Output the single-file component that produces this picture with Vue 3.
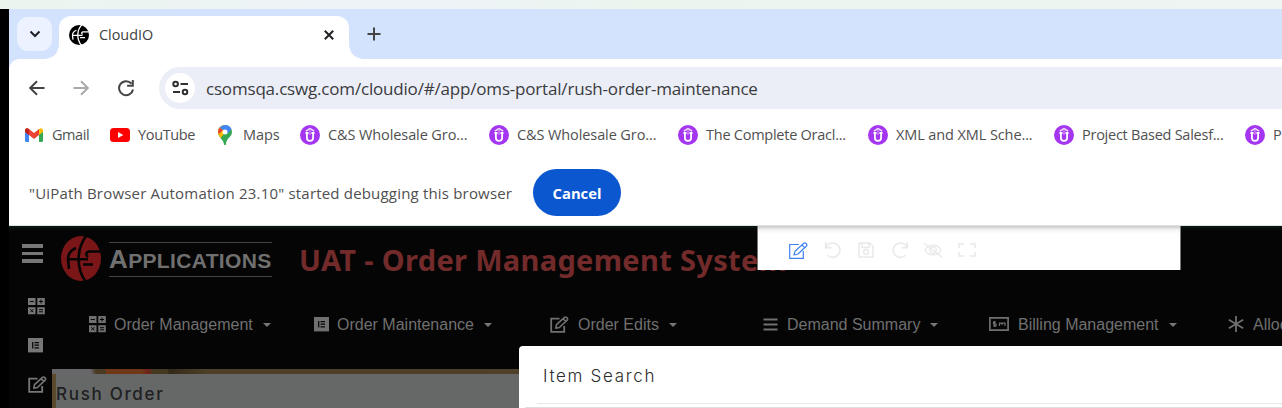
<script setup>
const courses = [
  { title: 'C&S Wholesale Gro...', width: 189 },
  { title: 'C&S Wholesale Gro...', width: 189 },
  { title: 'The Complete Oracl...', width: 190 },
  { title: 'XML and XML Sche...', width: 186 },
  { title: 'Project Based Salesf...', width: 191 },
  { title: 'P', width: 100 },
]
const menus = [
  { label: 'Order Management', icon: 'calc', w: 225 },
  { label: 'Order Maintenance', icon: 'form', w: 236 },
  { label: 'Order Edits', icon: 'edit', w: 213 },
  { label: 'Demand Summary', icon: 'bars', w: 226 },
  { label: 'Billing Management', icon: 'money', w: 239 },
  { label: 'Alloc', icon: 'star', w: 160 },
]
const tools = ['undo', 'save', 'redo', 'hide', 'full']
</script>

<template>
  <svg class="defs" aria-hidden="true">
    <symbol id="calc" viewBox="0 0 17 17">
      <path d="M0 0h7.5v7H0zM9.3 0h7.5v7H9.3zM0 9.2h7.5v7H0zM9.3 9.2h7.5v7H9.3z" fill="currentColor" />
      <path d="M1.8 3.5h4M11 3.5h4M13 1.5v4M2.3 11.2l3 3M5.3 11.2l-3 3M11 11.7h4M11 13.8h4" stroke="#050505" />
    </symbol>
    <symbol id="form" viewBox="0 0 15 15">
      <path d="M0 0h15v14.4H0z" fill="currentColor" />
      <path d="M4.7 4v6.5M6.5 4.7H11M6.5 7.2H11M6.5 9.8H11" stroke="#050505" stroke-width="1.2" />
    </symbol>
    <symbol id="edit" viewBox="0 0 19 17">
      <path d="M9.5 2.7H1.2v13.2h13V10" fill="none" stroke="currentColor" stroke-width="1.8" />
      <path d="M5.8 12.2l.7-3.6 8-7.2c1.4-1.2 4 .9 2.7 2.7L9.4 11.5zM13.2 2.7l2.8 2.9" fill="none" stroke="currentColor" stroke-width="1.6" stroke-linejoin="round" />
    </symbol>
    <symbol id="editthin" viewBox="0 0 19 17">
      <path d="M10 2.5H.7v13.8h13.6V9" fill="none" stroke="currentColor" stroke-width="1.2" />
      <path d="M5 13l1-3.7 8.8-8c1.3-1.2 4 .9 2.7 2.7L9 12zM13 3l2.8 2.8" fill="none" stroke="currentColor" stroke-width="1.2" stroke-linejoin="round" />
    </symbol>
    <symbol id="bars" viewBox="0 0 15 15">
      <path d="M.5 2.500h14M.5 7.500h14M.5 12.500h14" stroke="currentColor" stroke-width="1.800" />
    </symbol>
    <symbol id="money" viewBox="0 0 20 14">
      <path d="M.9.9h18.2v12.2H.9z" fill="none" stroke="currentColor" stroke-width="1.7" />
      <path d="M7 5H4.500v2H7v2H4M5.500 4v6M10.500 9V6.200H16V9M13 6v2" fill="none" stroke="currentColor" stroke-width="1.2" />
    </symbol>
    <symbol id="star" viewBox="0 0 16 16">
      <path d="M8 0v16M.8 3.8l14.4 8.4M15.2 3.8L.8 12.2" stroke="currentColor" stroke-width="1.8" />
    </symbol>
    <symbol id="undo" viewBox="0 0 18 18">
      <path d="M1.7 1v5.700h5.800M2 6.400a7.200 7.200 0 1 1 1.500 7.800" fill="none" stroke="currentColor" stroke-width="1.600" />
    </symbol>
    <symbol id="redo" viewBox="0 0 18 18">
      <path d="M16.3 1v5.700h-5.800M16 6.400a7.200 7.200 0 1 0-1.500 7.800" fill="none" stroke="currentColor" stroke-width="1.600" />
    </symbol>
    <symbol id="save" viewBox="0 0 18 18">
      <path d="M2 2h10.700L16 5.200V16H2zM5 2v4.500h7V2" fill="none" stroke="currentColor" stroke-width="1.500" />
      <circle cx="9" cy="11" r="2.400" fill="none" stroke="currentColor" stroke-width="1.500" />
    </symbol>
    <symbol id="hide" viewBox="0 0 20 18">
      <path d="M1 9c4-7.200 14-7.200 18 0-4 7.200-14 7.200-18 0zM0 1.500L20 17" fill="none" stroke="currentColor" stroke-width="1.500" />
      <circle cx="10" cy="9" r="3.600" fill="none" stroke="currentColor" stroke-width="1.500" />
    </symbol>
    <symbol id="full" viewBox="0 0 18 18">
      <path d="M1 7V3h5M12 3h5v4M17 11v4h-5M6 15H1v-4" fill="none" stroke="currentColor" stroke-width="1.500" />
    </symbol>
    <symbol id="globe" viewBox="0 0 40 45">
      <ellipse cx="20" cy="22.500" rx="20" ry="22.500" fill="currentColor" />
      <path class="cut" d="M26 -1C15 12 15 33 25 46M15 12C10 14 7 18 7 23.200L8 33M7 23.200H27M39 15.500H28C25 16 24.500 19 27 21M22 28.500H32" />
    </symbol>
    <symbol id="udemy" viewBox="0 0 20 20">
      <circle cx="10" cy="10" r="10" fill="#a435f0" />
      <path d="M5.800 6.200L10 3.700l4.200 2.500" fill="none" stroke="#f4e4ff" stroke-width="1.500" />
      <path d="M6.900 8v4.700c0 4.300 6.200 4.300 6.200 0V8M5.500 8h3M11.500 8h3" fill="none" stroke="#fff" stroke-width="1.800" />
      <path d="M10 4v6" stroke="#d79afa" stroke-width="1.100" />
    </symbol>
  </svg>

  <div class="screen">
    <div class="wallpaper"></div>
    <div class="window">
      <div class="tabs">
        <div class="tabsearch"><svg width="12" height="8"><path d="M1.500 1.500L6 6l4.500-4.500" /></svg></div>
        <div class="tab">
          <svg class="fav" preserveAspectRatio="none" viewBox="0 0 40 45"><use href="#globe" width="40" height="45" /></svg>
          <span class="tabname">CloudIO</span>
          <svg class="close" width="10" height="10"><path d="M.8.8l8.400 8.400M9.200.8L.8 9.200" /></svg>
        </div>
        <svg class="plus" width="14" height="14"><path d="M7 .5v13M.5 7h13" /></svg>
      </div>
      <div class="toolbar">
        <svg class="nav" width="16" height="16"><path d="M15.500 8H1.500M8 1.200L1.200 8 8 14.800" /></svg>
        <svg class="nav off" width="16" height="16"><path d="M.5 8h14M8 1.200L14.800 8 8 14.800" /></svg>
        <svg class="nav reload" width="18" height="18"><path d="M14.500 4.700A7 7 0 1 0 16 10.500M15.800 1v5.700h-5.700" /></svg>
        <div class="omnibox">
          <div class="site">
            <svg width="17" height="16"><circle cx="3.600" cy="4" r="2.300" /><path d="M8.500 4H16M1 12h7" /><circle cx="13" cy="12" r="2.300" /></svg>
          </div>
          <span class="url">csomsqa.cswg.com/cloudio/#/app/oms-portal/rush-order-maintenance</span>
        </div>
      </div>
      <div class="bookmarks">
        <div class="bm gmail">
          <svg width="18" height="14" viewBox="0 0 18 14">
            <path d="M0 2v10.500Q0 14 1.500 14H4V5z" fill="#4285f4" />
            <path d="M18 2v10.500q0 1.500-1.500 1.500H14V5z" fill="#34a853" />
            <path d="M14 1l-1 4 1 2 4-3V2q-1-3-4-1z" fill="#fbbc04" />
            <path d="M0 4V2q1-3 4-1l5 4 5-4v6l-5 4-5-4z" fill="#ea4335" />
            <path d="M0 2v2l4 3V1Q1-1 0 2z" fill="#c5221f" />
          </svg>
          <span>Gmail</span>
        </div>
        <div class="bm youtube">
          <svg width="20" height="14"><rect width="20" height="14" rx="3.500" fill="#f00" /><path d="M8 4l5.300 3L8 10z" fill="#fff" /></svg>
          <span>YouTube</span>
        </div>
        <div class="bm maps">
          <svg width="14" height="20" viewBox="0 0 14 20">
            <path d="M14 7c0 5-6 6-6 12.500q-1 1-2 0C6 15 0 12 0 7a7 7 0 0 1 14 0z" fill="#34a853" />
            <path d="M0 7q0 3 2.500 6L11 3 7 0Q0 1 0 7z" fill="#fbbc04" />
            <path d="M0 7q0-2 1.600-4.500L5 5 1 9z" fill="#ea4335" />
            <path d="M1.600 2.500Q4 0 7 0q5 0 6.500 4.500L9 9 5 5z" fill="#4285f4" />
            <circle cx="7" cy="7" r="2.500" fill="#fff" />
          </svg>
          <span>Maps</span>
        </div>
        <div v-for="(c, i) in courses" :key="i" class="bm course" :style="{ width: c.width + 'px' }">
          <svg width="20" height="20"><use href="#udemy" /></svg>
          <span>{{ c.title }}</span>
        </div>
      </div>
      <div class="infobar">
        <span class="message">"UiPath Browser Automation 23.10" started debugging this browser</span>
        <button class="cancel">Cancel</button>
      </div>

      <div class="app">
        <aside>
          <div class="burger"><i></i><i></i><i></i></div>
          <svg class="s1"><use href="#calc" /></svg>
          <svg class="s2"><use href="#form" /></svg>
          <svg class="s3"><use href="#edit" /></svg>
        </aside>
        <main>
          <header>
            <svg class="brand"><use href="#globe" /></svg>
            <div class="brandname"><span><b>A</b>PPLICATIONS</span></div>
            <h1>UAT - Order Management System</h1>
          </header>
          <nav>
            <div v-for="m in menus" :key="m.label" class="menu" :style="{ width: m.w + 'px' }">
              <svg :class="m.icon"><use :href="'#' + m.icon" /></svg>
              <span>{{ m.label }}</span>
              <i class="caret"></i>
            </div>
          </nav>
          <section class="page">
            <div class="photo"></div>
            <h2>Rush Order</h2>
          </section>
        </main>
        <div class="tools">
          <svg class="active"><use href="#editthin" /></svg>
          <svg v-for="t in tools" :key="t"><use :href="'#' + t" /></svg>
        </div>
        <div class="modal">
          <h3>Item Search</h3>
          <div class="rule"></div>
          <div class="body"></div>
        </div>
      </div>
    </div>
  </div>
</template>

<style>
body { overflow: hidden; }
</style>

<style scoped>
* { box-sizing: border-box; }
svg { flex: none; display: block; }
.defs { position: absolute; width: 0; height: 0; }
.screen { width: 1282px; height: 408px; overflow: hidden; background: #000; font-family: "Open Sans", "Noto Sans", sans-serif; white-space: nowrap; }
.wallpaper { height: 9px; background: linear-gradient(90deg, #ebf5ee, #eef3f9 400px, #ebf5ee 640px, #eef5f3); }
.window { margin-left: 9px; height: 399px; background: #fff; overflow: hidden; }

.tabs { height: 50px; background: #d3e3fd; display: flex; }
.tabsearch { width: 35px; height: 34px; margin: 8px 7px 0 8px; border-radius: 11px; background: #ecf2ff; display: flex; align-items: center; justify-content: center; }
.tabsearch svg { fill: none; stroke: #202124; stroke-width: 2; }
.tab { position: relative; width: 290px; height: 43px; margin-top: 7px; padding: 0 15px 6px 10px; border-radius: 12px 12px 0 0; background: #fff; display: flex; align-items: center; }
.tab::before, .tab::after { content: ""; position: absolute; bottom: 0; width: 14px; height: 14px; }
.tab::before { left: -14px; background: radial-gradient(circle at 0 0, transparent 13.500px, #fff 14px); }
.tab::after { right: -14px; background: radial-gradient(circle at 100% 0, transparent 13.500px, #fff 14px); }
.fav { width: 20px; height: 20px; color: #000; --cut: #fff; }
.cut { fill: none; stroke: var(--cut, #050505); stroke-width: 2.600; }
.tabname { margin-left: 10px; font-size: 14.400px; color: #404040; }
.close { margin-left: auto; stroke: #202124; stroke-width: 2; }
.plus { margin: 18px 0 0 18px; stroke: #444; stroke-width: 2; }

.toolbar { height: 53px; background: radial-gradient(circle at 10px 10px, #fff 9.500px, #d3e3fd 10px) 0 0 / 10px 10px no-repeat, linear-gradient(#fff, #fff) 10px 0 no-repeat; display: flex; align-items: center; padding: 5px 0 0 20px; }
.nav { fill: none; stroke: #444; stroke-width: 2; margin-right: 28px; }
.nav.off { stroke: #aaa; }
.nav.reload { margin-right: 24px; }
.omnibox { flex: 1; height: 42px; border-radius: 21px 0 0 21px; background: #ebeef7; display: flex; align-items: center; padding-left: 6px; }
.site { width: 30px; height: 30px; border-radius: 50%; background: #fff; display: flex; align-items: center; justify-content: center; }
.site svg { fill: none; stroke: #303030; stroke-width: 2; }
.url { margin-left: 11px; font-size: 17px; letter-spacing: -.185px; color: #3a3b3e; }

.bookmarks { height: 46px; display: flex; align-items: center; padding: 0 0 1px 16px; font-size: 14.500px; letter-spacing: -.1px; color: #505050; }
.bm { display: flex; align-items: center; flex: none; }
.bm svg { position: relative; top: .5px; }
.gmail { width: 85px; gap: 9px; }
.gmail span { letter-spacing: -.45px; }
.youtube { width: 108px; gap: 8px; }
.youtube span { letter-spacing: -.35px; }
.maps { width: 82px; gap: 11px; }
.course { gap: 8px; }
.course:nth-child(6) span, .course:nth-child(8) span { letter-spacing: -.25px; }

.infobar { height: 67px; padding: 2px 0 0 20px; display: flex; align-items: center; color: #505050; }
.message { width: 504px; font-size: 15px; letter-spacing: .185px; }
.cancel { width: 88px; height: 47px; border: 0; border-radius: 24px; background: #0b57d0; color: #fff; font: 700 14.800px "Open Sans", sans-serif; padding: 0; }

.app { position: relative; height: 183px; border-top: 1px solid #dde3df; background: #050505; display: flex; color: #707070; }
.app::before { content: ""; position: absolute; top: 0; left: 0; right: 0; height: 5px; background: linear-gradient(#0b1714, #050505); }
aside { width: 43px; position: relative; padding-top: 18px; }
.burger { display: grid; gap: 4px; width: 21px; margin-left: 13px; }
.burger i { height: 3.500px; background: #777; }
aside svg { color: #777; }
.s1 { width: 17px; height: 17px; margin: 35px 0 0 19px; }
.s2 { width: 15px; height: 15px; margin: 23px 0 0 19px; }
.s3 { width: 19px; height: 17px; margin: 23px 0 0 19px; }
main { flex: 1; min-width: 0; position: relative; }
header { height: 73px; display: flex; padding: 10px 0 0 9px; }
.brand { width: 40px; height: 45px; color: #7a1518; }
.brandname { width: 163px; height: 35px; margin: 6px 0 0 8px; border: solid #444; border-width: 1px 0; display: flex; align-items: center; }
.brandname span { font: 700 21px/30px "Liberation Sans", sans-serif; color: #707070; letter-spacing: .35px; }
.brandname b { font-size: 26px; }
h1 { margin: 4px 0 0 27px; font-size: 29px; line-height: 40px; letter-spacing: .33px; font-family: "Noto Sans", sans-serif; height: 40px; color: #722b2a; font-weight: 700; }
nav { height: 50px; display: flex; align-items: center; padding-left: 37px; font-family: "Liberation Sans", Arial, sans-serif; font-size: 16px; color: #707070; }
.menu { flex: none; display: flex; align-items: center; }
.menu span { margin-left: 8px; position: relative; top: 1px; }
.menu .calc { width: 17px; height: 17px; }
.menu .form { width: 15px; height: 15px; }
.menu .bars { width: 15px; height: 15px; margin-right: 1px; }
.menu .edit { width: 19px; height: 17px; margin-right: 1px; }
.menu .money { width: 20px; height: 14px; margin-right: 1px; }
.menu .star { width: 16px; height: 16px; margin-right: 1px; }
.caret { margin: 2px 0 0 10px; border: 4px solid transparent; border-top-color: #777; border-bottom: 0; }
.page { margin-top: 20px; height: 40px; background: #666867; border-left: 4px solid #5c4a2c; position: relative; }
.photo { height: 5px; margin-left: -4px; background: linear-gradient(75deg, #69666a 0 38px, #493b24 43px 52px, #703718 53px 88px, #6e2419 92px 94px, #453820 98px 112px, #332919 114px, #4d4027 150px, #514329); }
h2 { margin: 8px 0 0 0; font: 500 17px/24px "Inter", sans-serif; letter-spacing: 1.700px; color: #202022; }
.tools { position: absolute; left: 748px; top: 0; width: 424px; height: 44px; padding: 4px 0 0 31px; display: flex; align-items: center; gap: 15.600px; color: #e9e9eb; background: linear-gradient(#c8c8c8, #f4f4f4 4px, #fff 8px); border: solid #777; border-width: 0 1px; }
.tools svg { width: 18px; height: 18px; }
.tools svg.active { width: 19px; height: 17px; color: #3f83f1; }
.modal { position: absolute; left: 510px; top: 120px; width: 790px; height: 70px; background: #fff; border-radius: 4px 0 0 0; padding: 18px 0 0; }
h3 { margin: 0 0 0 24px; font: 300 17px/24px "Inter", sans-serif; letter-spacing: 1.680px; color: #2c2c2c; }
.rule { margin: 15px 0 3px 18px; height: 1px; background: #e6e6e6; }
.body { margin-left: 6px; height: 4px; background: #dedede; }
</style>
